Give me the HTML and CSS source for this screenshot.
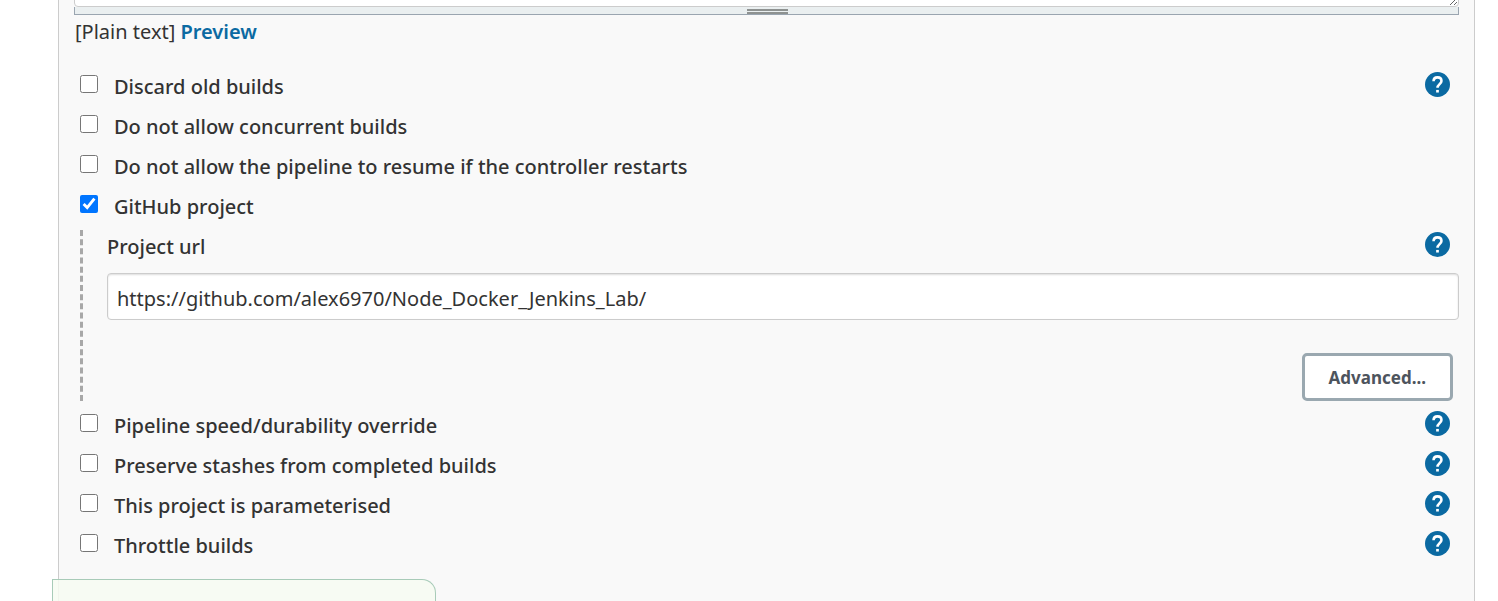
FILE: index.html
```html
<!DOCTYPE html>
<html lang="en">
<head>
<meta charset="utf-8">
<title>Project configuration</title>
<link rel="stylesheet" href="styles.css">
</head>
<body>
<svg class="sprite" aria-hidden="true">
  <symbol id="help" viewBox="0 0 24 24">
    <circle cx="12" cy="12" r="12" fill="#0b6aa2"/>
    <path d="M8.2 8.9C8.2 6.6 9.8 5.2 12 5.2s3.8 1.3 3.8 3.4c0 2.9-3.8 3.2-3.8 6.6" fill="none" stroke="#fff" stroke-width="2.5"/>
    <rect x="10.7" y="17.2" width="2.6" height="2.5" fill="#fff"/>
  </symbol>
</svg>
<main class="panel">
  <div class="editor">
    <textarea class="description" aria-label="Description"></textarea>
    <div class="handle"><span class="grip"></span></div>
  </div>
  <div class="preview">[Plain text] <a class="link" href="#preview">Preview</a></div>
  <form class="options">
    <div class="row"><label class="option"><input class="check" type="checkbox"><span>Discard old builds</span></label><button class="help" type="button" aria-label="Help"><svg class="icon"><use href="#help"/></svg></button></div>
    <div class="row"><label class="option"><input class="check" type="checkbox"><span>Do not allow concurrent builds</span></label></div>
    <div class="row"><label class="option"><input class="check" type="checkbox"><span>Do not allow the pipeline to resume if the controller restarts</span></label></div>
    <div class="row"><label class="option"><input class="check" type="checkbox" checked><span>GitHub project</span></label></div>
    <section class="nested">
      <div class="row"><label for="url">Project url</label><button class="help" type="button" aria-label="Help"><svg class="icon"><use href="#help"/></svg></button></div>
      <input class="url" id="url" type="text" value="https://github.com/alex6970/Node_Docker_Jenkins_Lab/">
      <div class="actions"><button class="advanced" type="button">Advanced...</button></div>
    </section>
    <div class="row"><label class="option"><input class="check" type="checkbox"><span>Pipeline speed/durability override</span></label><button class="help" type="button" aria-label="Help"><svg class="icon"><use href="#help"/></svg></button></div>
    <div class="row"><label class="option"><input class="check" type="checkbox"><span>Preserve stashes from completed builds</span></label><button class="help" type="button" aria-label="Help"><svg class="icon"><use href="#help"/></svg></button></div>
    <div class="row"><label class="option"><input class="check" type="checkbox"><span>This project is parameterised</span></label><button class="help" type="button" aria-label="Help"><svg class="icon"><use href="#help"/></svg></button></div>
    <div class="row"><label class="option"><input class="check" type="checkbox"><span>Throttle builds</span></label><button class="help" type="button" aria-label="Help"><svg class="icon"><use href="#help"/></svg></button></div>
  </form>
</main>
<div class="savebar"></div>
</body>
</html>
```

FILE: styles.css
```css
* { box-sizing: border-box; }
body {
  margin: 0;
  overflow: hidden;
  background: #fff;
  color: #333;
  font-family: "Segoe UI", "Noto Sans", sans-serif;
  font-size: 20px;
  line-height: 30px;
}
.sprite { display: none; }
.panel {
  display: flow-root;
  min-height: 100vh;
  margin: 0 23px 0 58px;
  padding: 0 15px;
  border: solid #ccc;
  border-width: 0 1px;
  background: #f9f9f9;
}
.editor { margin-top: -93px; }
.description {
  display: block;
  width: 100%;
  height: 100px;
  border: 1px solid #ccc;
  border-radius: 4px;
  background: #fff;
  resize: vertical;
}
.handle {
  display: flex;
  justify-content: center;
  height: 8px;
  padding: 2px 0 0 2px;
  border: 1px solid #9aa5b0;
  border-top: 0;
  background: #eaeff0;
}
.grip {
  width: 41px;
  height: 5px;
  border: solid #8e9291;
  border-width: 2px 0;
  background: #eaeff0;
}
.preview { margin-top: 2px; padding-left: 1px; }
.link { color: #0b6aa2; font-weight: 600; text-decoration: none; }
.options { padding-top: 19px; font-weight: 500; }
.row {
  display: flex;
  align-items: center;
  justify-content: space-between;
  min-height: 40px;
  padding: 0 9px 0 6px;
}
.row span, .row label[for] { padding-top: 2px; }
.option { display: flex; align-items: center; gap: 16px; }
.check { width: 18px; height: 18px; margin: 0 0 4px; }
.help {
  display: flex;
  margin: 0 0 3px;
  padding: 0;
  border: 0;
  background: none;
}
.icon { width: 25px; height: 25px; }
.nested {
  margin: 4px 0 4px 6px;
  padding-left: 24px;
  border-left: 3px dashed #a8a8a8;
}
.nested .row { min-height: 32px; padding-left: 0; }
.url {
  display: block;
  width: 100%;
  height: 47px;
  margin-top: 11px;
  padding: 4px 9px 0;
  border: 1px solid #ccc;
  border-radius: 4px;
  box-shadow: inset 0 1px 2px #ddd;
  background: #fff;
  color: #333;
  font: inherit;
  font-weight: 400;
}
.actions { display: flex; justify-content: flex-end; padding: 33px 6px 0 0; }
.advanced {
  height: 48px;
  padding: 0 24px;
  border: 3px solid #9aa8b0;
  border-radius: 5px;
  background: #fff;
  color: #4d545d;
  font: 700 17px "Segoe UI", "Noto Sans", sans-serif;
}
.savebar {
  position: fixed;
  bottom: 0;
  left: 52px;
  width: 384px;
  height: 22px;
  border: 1px solid #a8cbb8;
  border-bottom: 0;
  border-top-right-radius: 14px;
  background: rgba(247, 251, 242, 0.85);
}
```
